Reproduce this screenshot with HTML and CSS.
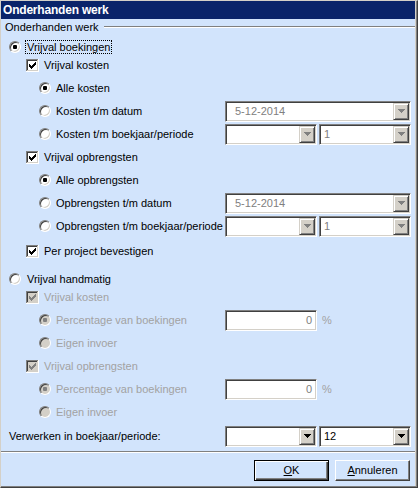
FILE: index.html
```html
<!DOCTYPE html>
<html>
<head>
<meta charset="utf-8">
<title>Onderhanden werk</title>
<link rel="stylesheet" href="styles.css">
</head>
<body>
<div class="window"><div class="frame"><div class="client">
  <div class="titlebar">Onderhanden werk</div>
  <div class="group-head"><span class="group-title">Onderhanden werk</span><span class="group-line"></span></div>
  <div class="options">
    <div class="section">
      <div class="row"><span class="radio l0 checked"></span><span class="label focus on">Vrijval boekingen</span></div>
      <div class="indent">
        <div class="row">
          <svg class="check" width="13" height="13" viewBox="0 0 13 13" shape-rendering="crispEdges"><rect class="cb-fill" x="2" y="2" width="9" height="9"/><rect x="0" y="0" width="12" height="1" fill="#808080"/><rect x="0" y="0" width="1" height="12" fill="#808080"/><rect x="1" y="1" width="10" height="1" fill="#404040"/><rect x="1" y="1" width="1" height="10" fill="#404040"/><rect x="12" y="0" width="1" height="13" fill="#ffffff"/><rect x="0" y="12" width="13" height="1" fill="#ffffff"/><rect x="11" y="1" width="1" height="11" fill="#d4d0c8"/><rect x="1" y="11" width="11" height="1" fill="#d4d0c8"/><path class="cb-tick" d="M3 5H4V6H5V7H6V6H7V5H8V4H9V3H10V6H9V7H8V8H7V9H6V10H5V9H4V8H3Z"/></svg>
          <span class="label">Vrijval kosten</span>
        </div>
        <div class="row l2"><span class="radio checked"></span><span class="label">Alle kosten</span></div>
        <div class="row l2"><span class="radio"></span><span class="label">Kosten t/m datum</span>
          <div class="fields">
            <div class="combo full disabled"><span class="combo-text date">5-12-2014</span><span class="combo-btn"><svg width="7" height="4" viewBox="0 0 7 4" shape-rendering="crispEdges"><path d="M0 0H7V1H6V2H5V3H4V4H3V3H2V2H1V1H0Z"/></svg></span></div>
          </div>
        </div>
        <div class="row l2"><span class="radio"></span><span class="label">Kosten t/m boekjaar/periode</span>
          <div class="fields">
            <div class="combo half disabled"><span class="combo-text"></span><span class="combo-btn"><svg width="7" height="4" viewBox="0 0 7 4" shape-rendering="crispEdges"><path d="M0 0H7V1H6V2H5V3H4V4H3V3H2V2H1V1H0Z"/></svg></span></div>
            <div class="combo half disabled"><span class="combo-text">1</span><span class="combo-btn"><svg width="7" height="4" viewBox="0 0 7 4" shape-rendering="crispEdges"><path d="M0 0H7V1H6V2H5V3H4V4H3V3H2V2H1V1H0Z"/></svg></span></div>
          </div>
        </div>
        <div class="row">
          <svg class="check" width="13" height="13" viewBox="0 0 13 13" shape-rendering="crispEdges"><rect class="cb-fill" x="2" y="2" width="9" height="9"/><rect x="0" y="0" width="12" height="1" fill="#808080"/><rect x="0" y="0" width="1" height="12" fill="#808080"/><rect x="1" y="1" width="10" height="1" fill="#404040"/><rect x="1" y="1" width="1" height="10" fill="#404040"/><rect x="12" y="0" width="1" height="13" fill="#ffffff"/><rect x="0" y="12" width="13" height="1" fill="#ffffff"/><rect x="11" y="1" width="1" height="11" fill="#d4d0c8"/><rect x="1" y="11" width="11" height="1" fill="#d4d0c8"/><path class="cb-tick" d="M3 5H4V6H5V7H6V6H7V5H8V4H9V3H10V6H9V7H8V8H7V9H6V10H5V9H4V8H3Z"/></svg>
          <span class="label">Vrijval opbrengsten</span>
        </div>
        <div class="row l2"><span class="radio checked"></span><span class="label">Alle opbrengsten</span></div>
        <div class="row l2"><span class="radio"></span><span class="label">Opbrengsten t/m datum</span>
          <div class="fields">
            <div class="combo full disabled"><span class="combo-text date">5-12-2014</span><span class="combo-btn"><svg width="7" height="4" viewBox="0 0 7 4" shape-rendering="crispEdges"><path d="M0 0H7V1H6V2H5V3H4V4H3V3H2V2H1V1H0Z"/></svg></span></div>
          </div>
        </div>
        <div class="row l2"><span class="radio"></span><span class="label">Opbrengsten t/m boekjaar/periode</span>
          <div class="fields">
            <div class="combo half disabled"><span class="combo-text"></span><span class="combo-btn"><svg width="7" height="4" viewBox="0 0 7 4" shape-rendering="crispEdges"><path d="M0 0H7V1H6V2H5V3H4V4H3V3H2V2H1V1H0Z"/></svg></span></div>
            <div class="combo half disabled"><span class="combo-text">1</span><span class="combo-btn"><svg width="7" height="4" viewBox="0 0 7 4" shape-rendering="crispEdges"><path d="M0 0H7V1H6V2H5V3H4V4H3V3H2V2H1V1H0Z"/></svg></span></div>
          </div>
        </div>
        <div class="row extra">
          <svg class="check" width="13" height="13" viewBox="0 0 13 13" shape-rendering="crispEdges"><rect class="cb-fill" x="2" y="2" width="9" height="9"/><rect x="0" y="0" width="12" height="1" fill="#808080"/><rect x="0" y="0" width="1" height="12" fill="#808080"/><rect x="1" y="1" width="10" height="1" fill="#404040"/><rect x="1" y="1" width="1" height="10" fill="#404040"/><rect x="12" y="0" width="1" height="13" fill="#ffffff"/><rect x="0" y="12" width="13" height="1" fill="#ffffff"/><rect x="11" y="1" width="1" height="11" fill="#d4d0c8"/><rect x="1" y="11" width="11" height="1" fill="#d4d0c8"/><path class="cb-tick" d="M3 5H4V6H5V7H6V6H7V5H8V4H9V3H10V6H9V7H8V8H7V9H6V10H5V9H4V8H3Z"/></svg>
          <span class="label">Per project bevestigen</span>
        </div>
      </div>
    </div>

    <div class="section">
      <div class="row"><span class="radio l0"></span><span class="label focus">Vrijval handmatig</span></div>
      <div class="indent">
        <div class="row">
          <svg class="check disabled" width="13" height="13" viewBox="0 0 13 13" shape-rendering="crispEdges"><rect class="cb-fill" x="2" y="2" width="9" height="9"/><rect x="0" y="0" width="12" height="1" fill="#808080"/><rect x="0" y="0" width="1" height="12" fill="#808080"/><rect x="1" y="1" width="10" height="1" fill="#404040"/><rect x="1" y="1" width="1" height="10" fill="#404040"/><rect x="12" y="0" width="1" height="13" fill="#ffffff"/><rect x="0" y="12" width="13" height="1" fill="#ffffff"/><rect x="11" y="1" width="1" height="11" fill="#d4d0c8"/><rect x="1" y="11" width="11" height="1" fill="#d4d0c8"/><path class="cb-tick" d="M3 5H4V6H5V7H6V6H7V5H8V4H9V3H10V6H9V7H8V8H7V9H6V10H5V9H4V8H3Z"/></svg>
          <span class="label dim">Vrijval kosten</span>
        </div>
        <div class="row l2"><span class="radio checked disabled"></span><span class="label dim">Percentage van boekingen</span>
          <div class="fields">
            <div class="textbox">0</div><span class="unit">%</span>
          </div>
        </div>
        <div class="row l2"><span class="radio disabled"></span><span class="label dim">Eigen invoer</span></div>
        <div class="row">
          <svg class="check disabled" width="13" height="13" viewBox="0 0 13 13" shape-rendering="crispEdges"><rect class="cb-fill" x="2" y="2" width="9" height="9"/><rect x="0" y="0" width="12" height="1" fill="#808080"/><rect x="0" y="0" width="1" height="12" fill="#808080"/><rect x="1" y="1" width="10" height="1" fill="#404040"/><rect x="1" y="1" width="1" height="10" fill="#404040"/><rect x="12" y="0" width="1" height="13" fill="#ffffff"/><rect x="0" y="12" width="13" height="1" fill="#ffffff"/><rect x="11" y="1" width="1" height="11" fill="#d4d0c8"/><rect x="1" y="11" width="11" height="1" fill="#d4d0c8"/><path class="cb-tick" d="M3 5H4V6H5V7H6V6H7V5H8V4H9V3H10V6H9V7H8V8H7V9H6V10H5V9H4V8H3Z"/></svg>
          <span class="label dim">Vrijval opbrengsten</span>
        </div>
        <div class="row l2"><span class="radio checked disabled"></span><span class="label dim">Percentage van boekingen</span>
          <div class="fields">
            <div class="textbox">0</div><span class="unit">%</span>
          </div>
        </div>
        <div class="row l2"><span class="radio disabled"></span><span class="label dim">Eigen invoer</span></div>
      </div>
    </div>

    <div class="row period">
      <span class="label">Verwerken in boekjaar/periode:</span>
      <div class="fields">
        <div class="combo half"><span class="combo-text"></span><span class="combo-btn"><svg width="7" height="4" viewBox="0 0 7 4" shape-rendering="crispEdges"><path d="M0 0H7V1H6V2H5V3H4V4H3V3H2V2H1V1H0Z"/></svg></span></div>
        <div class="combo half"><span class="combo-text">12</span><span class="combo-btn"><svg width="7" height="4" viewBox="0 0 7 4" shape-rendering="crispEdges"><path d="M0 0H7V1H6V2H5V3H4V4H3V3H2V2H1V1H0Z"/></svg></span></div>
      </div>
    </div>
  </div>

  <div class="separator"></div>
  <div class="footer">
    <button class="btn default"><u>O</u>K</button>
    <button class="btn"><u>A</u>nnuleren</button>
  </div>
</div></div></div>
</body>
</html>
```

FILE: styles.css
```css
* { box-sizing: border-box; }

html, body {
  margin: 0;
  padding: 0;
}

body {
  width: 418px;
  height: 488px;
  overflow: hidden;
  background: #d4d0c8;
  font-family: "Liberation Sans", Arial, sans-serif;
  font-size: 11px;
  color: #000;
}

.window {
  width: 418px;
  height: 488px;
  border-style: solid;
  border-width: 1px;
  border-color: #d4d0c8 #404040 #404040 #d4d0c8;
}

.frame {
  height: 100%;
  border-right: 1px solid #808080;
  border-bottom: 1px solid #808080;
}

.client {
  height: 100%;
  border-right: 1px solid #d4d0c8;
  background: #d2e4fc;
  display: flex;
  flex-direction: column;
}

.titlebar {
  height: 18px;
  flex: none;
  background: #0a246a;
  color: #fff;
  font-weight: bold;
  font-size: 12px;
  letter-spacing: -0.2px;
  line-height: 18px;
  padding-left: 2px;
  white-space: nowrap;
}

.group-head {
  height: 16px;
  flex: none;
  display: flex;
  align-items: center;
  padding-left: 4px;
  line-height: 13px;
}

.group-line {
  flex: 1;
  height: 2px;
  margin-left: 5px;
  border-top: 1px solid #808080;
  border-bottom: 1px solid #fff;
}

.options {
  display: flex;
  flex-direction: column;
  padding: 3px 4px 0 8px;
}

.section {
  display: flex;
  flex-direction: column;
}

.section + .section {
  margin-top: 10px;
}

.indent {
  display: flex;
  flex-direction: column;
  gap: 5px;
  margin-left: 17px;
}

.row {
  height: 18px;
  display: flex;
  align-items: center;
  white-space: nowrap;
}

.row.l2 {
  padding-left: 13px;
}

.row.extra {
  margin-top: 2px;
}

.row.period {
  margin-top: 6px;
}

.label {
  line-height: 13px;
}

.label.dim {
  color: #a2a2a2;
}

.focus {
  line-height: 12px;
  border: 1px dotted transparent;
  padding: 0 1px;
}

.focus.on {
  border-color: #000;
}

/* radio button */
.radio {
  position: relative;
  flex: none;
  width: 12px;
  height: 12px;
  margin-right: 5px;
  border-radius: 50%;
  border: 1px solid;
  border-color: #808080 #fff #fff #808080;
  box-shadow: inset 1px 1px 0 #404040, inset -1px -1px 0 #d4d0c8;
  background: #fff;
}

.radio.l0 {
  margin-right: 4px;
}

.radio.checked::after {
  content: "";
  position: absolute;
  left: 3px;
  top: 3px;
  width: 4px;
  height: 4px;
  border-radius: 1px;
  background: #000;
}

.radio.disabled {
  background: #d4d0c8;
}

.radio.disabled.checked::after {
  background: #808080;
}

/* checkbox */
.check {
  display: block;
  flex: none;
  margin-right: 5px;
}

.cb-fill { fill: #fff; }
.cb-tick { fill: #000; }
.check.disabled .cb-fill { fill: #d4d0c8; }
.check.disabled .cb-tick { fill: #808080; }

/* fields */
.fields {
  margin-left: auto;
  width: 186px;
  flex: none;
  display: flex;
  align-items: center;
  gap: 2px;
}

.combo {
  height: 21px;
  display: flex;
  padding: 1px;
  border: 1px solid;
  border-color: #808080 #fff #fff #808080;
  box-shadow: inset 1px 1px 0 #404040, inset -1px -1px 0 #d4d0c8;
  background: #fff;
}

.combo.full { width: 186px; }
.combo.half { width: 92px; }

.combo-text {
  flex: 1;
  padding-left: 3px;
  line-height: 17px;
  background: #fff;
  overflow: hidden;
}

.combo-text.date {
  padding-left: 8px;
}

.combo.disabled .combo-text {
  color: #808080;
}

.combo-btn {
  flex: none;
  width: 16px;
  height: 17px;
  display: flex;
  align-items: center;
  justify-content: center;
  background: #d4d0c8;
  border: 1px solid;
  border-color: #d4d0c8 #404040 #404040 #d4d0c8;
  box-shadow: inset 1px 1px 0 #fff, inset -1px -1px 0 #808080;
}

.combo-btn svg {
  display: block;
  fill: #000;
}

.combo.disabled .combo-btn svg {
  fill: #808080;
}

.textbox {
  width: 92px;
  height: 21px;
  padding: 1px 4px 1px 2px;
  border: 1px solid;
  border-color: #808080 #fff #fff #808080;
  box-shadow: inset 1px 1px 0 #404040, inset -1px -1px 0 #d4d0c8;
  background: #fff;
  color: #808080;
  text-align: right;
  line-height: 17px;
}

.unit {
  margin-left: 3px;
  color: #a2a2a2;
}

/* footer */
.separator {
  flex: none;
  height: 2px;
  margin-top: 6px;
  border-top: 1px solid #808080;
  border-bottom: 1px solid #fff;
}

.footer {
  display: flex;
  justify-content: flex-end;
  gap: 6px;
  padding: 7px 5px 0 0;
}

.btn {
  width: 75px;
  height: 21px;
  padding: 0;
  margin: 0;
  font-family: "Liberation Sans", Arial, sans-serif;
  font-size: 11px;
  color: #000;
  background: #d2e4fc;
  border: 1px solid;
  border-color: #fff #404040 #404040 #fff;
  box-shadow: inset -1px -1px 0 #808080;
  line-height: 17px;
}

.btn.default {
  border-color: #000;
  box-shadow: inset 1px 1px 0 #fff, inset -1px -1px 0 #404040, inset -2px -2px 0 #808080;
}
```
